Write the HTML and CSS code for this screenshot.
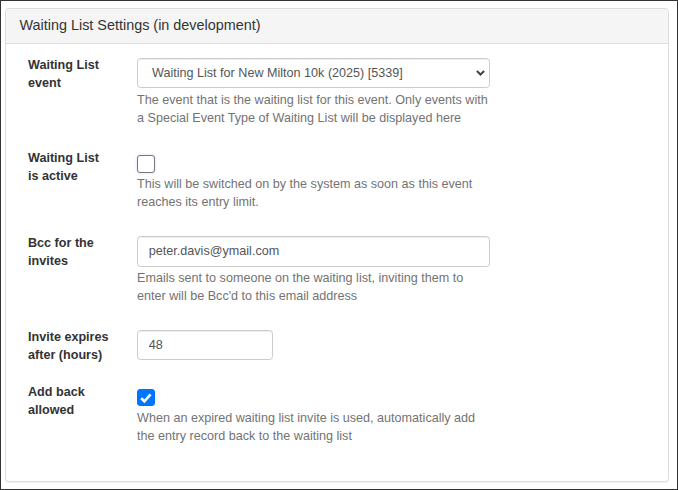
FILE: index.html
```html
<!DOCTYPE html>
<html lang="en">
<head>
<meta charset="utf-8">
<title>Waiting List Settings</title>
<link rel="stylesheet" href="styles.css">
</head>
<body>
<div class="frame">
  <section class="panel">
    <div class="panel-heading">
      <h3 class="panel-title">Waiting List Settings (in development)</h3>
    </div>
    <div class="panel-body">
      <form class="form">
        <div class="form-group">
          <label class="control-label">Waiting List event</label>
          <div class="control">
            <div class="select-wrap">
              <select class="form-control select">
                <option>Waiting List for New Milton 10k (2025) [5339]</option>
              </select>
              <svg class="chev" width="10" height="6" viewBox="0 0 10 6" aria-hidden="true"><path d="M1 1 L5 5 L9 1" fill="none" stroke="#444" stroke-width="2.2"/></svg>
            </div>
            <p class="help">The event that is the waiting list for this event. Only events with a Special Event Type of Waiting List will be displayed here</p>
          </div>
        </div>

        <div class="form-group">
          <label class="control-label">Waiting List is active</label>
          <div class="control">
            <span class="cb" role="checkbox" aria-checked="false"></span>
            <p class="help help-cb">This will be switched on by the system as soon as this event reaches its entry limit.</p>
          </div>
        </div>

        <div class="form-group">
          <label class="control-label">Bcc for the invites</label>
          <div class="control">
            <input class="form-control" type="text" value="peter.davis@ymail.com">
            <p class="help">Emails sent to someone on the waiting list, inviting them to enter will be Bcc'd to this email address</p>
          </div>
        </div>

        <div class="form-group">
          <label class="control-label">Invite expires after (hours)</label>
          <div class="control">
            <input class="form-control short" type="text" value="48">
          </div>
        </div>

        <div class="form-group">
          <label class="control-label">Add back allowed</label>
          <div class="control">
            <span class="cb cb-on" role="checkbox" aria-checked="true"><svg width="18" height="18" viewBox="0 0 18 18" aria-hidden="true"><path d="M4.2 9.2 L7.4 12.3 L13.6 5.4" fill="none" stroke="#fff" stroke-width="2.6"/></svg></span>
            <p class="help help-cb">When an expired waiting list invite is used, automatically add the entry record back to the waiting list</p>
          </div>
        </div>
      </form>
    </div>
  </section>
</div>
</body>
</html>
```

FILE: styles.css
```css
* { box-sizing: border-box; }

html, body {
  margin: 0;
  padding: 0;
  background: #fff;
}

body {
  font-family: "Liberation Sans", Arial, Helvetica, sans-serif;
  font-size: 12.6px;
  line-height: 18px;
  color: #333;
}

.frame {
  width: 678px;
  height: 490px;
  border: 1px solid #333;
  padding: 7px 8px 7px 4px;
  display: flex;
  flex-direction: column;
  background: #fff;
}

.panel {
  flex: 1;
  border: 1px solid #ddd;
  border-radius: 3.6px;
  box-shadow: 0 1px 1px rgba(0, 0, 0, 0.05);
  background: #fff;
}

.panel-heading {
  background: #f5f5f5;
  border-bottom: 1px solid #ddd;
  border-radius: 3px 3px 0 0;
  padding: 9px 13.5px;
}

.panel-title {
  margin: 0;
  font-size: 14.4px;
  line-height: 15.84px;
  font-weight: normal;
  color: #333;
}

.panel-body {
  padding: 12px 22px 0 22px;
}

.form {
  display: flex;
  flex-direction: column;
  gap: 22.5px;
}

.form-group {
  display: grid;
  grid-template-columns: 83px 353px;
  column-gap: 26px;
  align-items: start;
}

.control-label {
  font-weight: bold;
  color: #333;
  margin-bottom: -6px;
}

.control {
  padding-top: 2px;
  display: flex;
  flex-direction: column;
  align-items: flex-start;
}

.form-control {
  width: 353px;
  height: 30.6px;
  border: 1px solid #ccc;
  border-radius: 3.6px;
  box-shadow: inset 0 1px 1px rgba(0, 0, 0, 0.075);
  padding: 0 10.8px;
  font-family: inherit;
  font-size: 12.6px;
  color: #555;
  background: #fff;
  margin: 0;
}

.form-control.short {
  width: 136px;
}

.select-wrap {
  position: relative;
  width: 353px;
}

.select {
  appearance: none;
  -webkit-appearance: none;
  padding-left: 14px;
  padding-right: 28px;
}

.chev {
  position: absolute;
  right: 5px;
  top: 12.5px;
  width: 9px;
  height: 5.5px;
  pointer-events: none;
}

.help {
  margin: 2.5px 0 0 0;
  color: #737373;
  width: 353px;
}

.cb {
  display: block;
  width: 17.5px;
  height: 17.5px;
  margin-top: 4px;
  border: 1px solid #767676;
  border-radius: 3px;
  background: #fff;
  box-shadow: 0 0 2px 1px rgba(120, 160, 255, 0.18);
}

.cb.cb-on {
  background: #0075ff;
  border-color: #0075ff;
  box-shadow: none;
  position: relative;
}

.cb.cb-on svg {
  position: absolute;
  left: -1px;
  top: -1px;
}
```
